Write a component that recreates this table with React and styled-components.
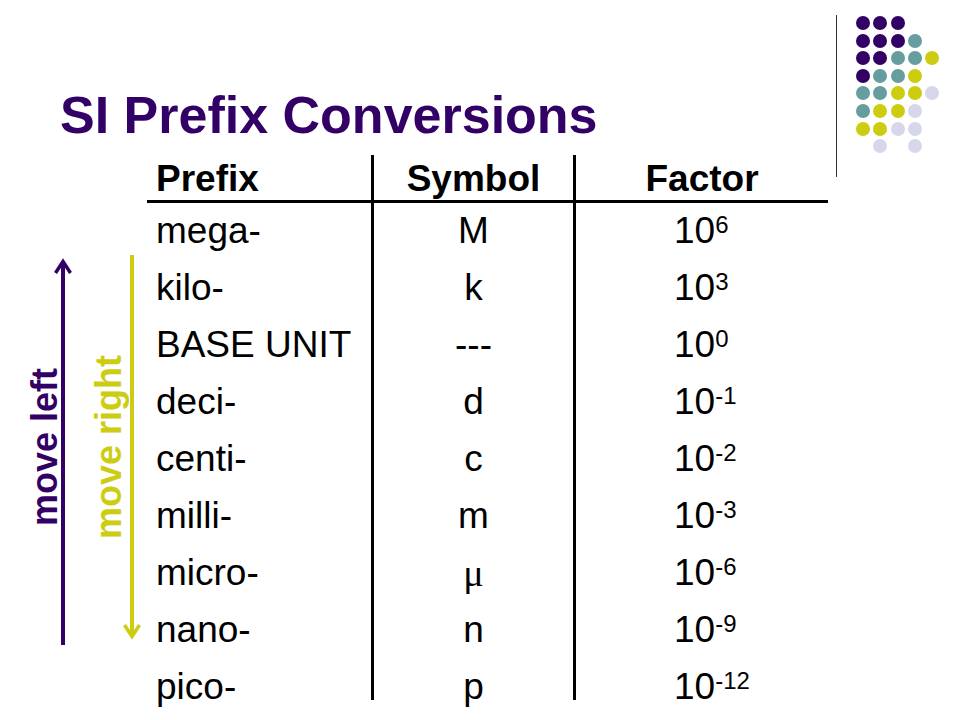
import styled, { createGlobalStyle } from "styled-components";

const GlobalStyle = createGlobalStyle`
    html, body {
        margin: 0;
        padding: 0;
        background: #fff;
    }
    body {
        font-family: "Liberation Sans", Arial, sans-serif;
        color: #000;
    }
`;

const PURPLE = "#330066";
const TEAL = "#669d9e";
const YELLOW = "#cccc11";
const LAVENDER = "#d7d7ec";

const Slide = styled.div`
    width: 960px;
    height: 720px;
    display: grid;
    grid-template-columns: 147px 681px 1fr;
    grid-template-rows: 155px 1fr;
    overflow: hidden;
    font-family: "Liberation Sans", Arial, sans-serif;
`;

const Title = styled.h1`
    grid-column: 1 / 3;
    grid-row: 1;
    margin: 0;
    padding: 86px 0 0 60px;
    font-size: 52px;
    font-weight: 700;
    line-height: 59px;
    color: ${PURPLE};
    white-space: nowrap;
`;

const Decor = styled.div`
    grid-column: 3;
    grid-row: 1 / 3;
    display: flex;
    align-items: flex-start;
    padding: 15px 0 0 8px;
`;

const Rule = styled.div`
    width: 1px;
    height: 162px;
    background: #333;
`;

const DotGrid = styled.div`
    display: grid;
    grid-template-columns: repeat(5, 14px);
    grid-auto-rows: 14px;
    column-gap: 3.3px;
    row-gap: 3.6px;
    margin: 1px 0 0 19px;
`;

const Dot = styled.span`
    width: 14px;
    height: 14px;
    border-radius: 50%;
    background: ${p => p.$color || "transparent"};
`;

const Side = styled.div`
    grid-column: 1;
    grid-row: 2;
    display: flex;
    align-items: flex-start;
    padding-left: 27px;
`;

const ArrowGroup = styled.div`
    display: flex;
    align-items: center;
    margin-top: ${p => p.$top}px;
    margin-right: ${p => p.$after || 0}px;
`;

const Label = styled.span`
    writing-mode: vertical-rl;
    transform: rotate(180deg);
    font-size: 36px;
    font-weight: 700;
    line-height: 36px;
    white-space: nowrap;
    color: ${p => p.$color};
    margin-top: ${p => p.$shift || 0}px;
`;

const ArrowSvg = styled.svg`
    display: block;
    margin-left: ${p => p.$pull}px;
    flex: none;
`;

const Table = styled.div`
    grid-column: 2;
    grid-row: 2;
    display: grid;
    grid-template-columns: 224px 202px 255px;
    align-content: start;
`;

const Cell = styled.div`
    box-sizing: border-box;
    height: ${p => (p.$head ? 48 : p.$last ? 41 : 57)}px;
    padding-top: ${p => (p.$head ? 3 : 7)}px;
    font-size: 37px;
    line-height: 42px;
    font-weight: ${p => (p.$head ? 700 : 400)};
    border-bottom: ${p => (p.$head ? "3px solid #000" : "none")};
    border-left: ${p => (p.$divided ? "3px solid #000" : "none")};
    white-space: nowrap;
`;

const PrefixCell = styled(Cell)`
    padding-left: 9px;
`;

const SymbolCell = styled(Cell)`
    text-align: center;
`;

const FactorCell = styled(Cell)`
    text-align: ${p => (p.$head ? "center" : "left")};
    padding-left: ${p => (p.$head ? 0 : 98)}px;
`;

const Mu = styled.span`
    font-family: "Liberation Serif", "Times New Roman", serif;
    font-size: 38px;
`;

const Sup = styled.sup`
    font-size: 24px;
    line-height: 0;
    vertical-align: 10px;
`;

const dots = [
    "PPP..",
    "PPPT.",
    "PPTTY",
    "PTTY.",
    "TTYYL",
    "TYYL.",
    "YYLL.",
    ".L.L.",
];
const dotColors = { P: PURPLE, T: TEAL, Y: YELLOW, L: LAVENDER };

const rows = [
    ["mega-", "M", "6"],
    ["kilo-", "k", "3"],
    ["BASE UNIT", "---", "0"],
    ["deci-", "d", "-1"],
    ["centi-", "c", "-2"],
    ["milli-", "m", "-3"],
    ["micro-", "μ", "-6"],
    ["nano-", "n", "-9"],
    ["pico-", "p", "-12"],
];

function Arrow({ height, color, up, pull }) {
    const h = height;
    return (
        <ArrowSvg width="18" height={h} viewBox={`0 0 18 ${h}`} $pull={pull}>
            {up ? (
                <>
                    <line x1="9" y1="4" x2="9" y2={h} stroke={color} strokeWidth="4" />
                    <polyline points="1.5,15 9,3.5 16.5,15" fill="none" stroke={color} strokeWidth="3.5" />
                </>
            ) : (
                <>
                    <line x1="9" y1="0" x2="9" y2={h - 4} stroke={color} strokeWidth="4" />
                    <polyline points={`1.5,${h - 15} 9,${h - 3.5} 16.5,${h - 15}`} fill="none" stroke={color} strokeWidth="3.5" />
                </>
            )}
        </ArrowSvg>
    );
}

export default function App() {
    return (
        <>
            <GlobalStyle />
            <Slide>
                <Title>SI Prefix Conversions</Title>
                <Decor>
                    <Rule />
                    <DotGrid>
                        {dots.join("").split("").map((c, i) => (
                            <Dot key={i} $color={dotColors[c]} />
                        ))}
                    </DotGrid>
                </Decor>
                <Side>
                    <ArrowGroup $top={103} $after={19}>
                        <Label $color={PURPLE} $shift={-9}>move left</Label>
                        <Arrow height={387} color={PURPLE} pull={-9} up />
                    </ArrowGroup>
                    <ArrowGroup $top={100}>
                        <Label $color={YELLOW}>move right</Label>
                        <Arrow height={385} color={YELLOW} pull={-4} />
                    </ArrowGroup>
                </Side>
                <Table>
                    <PrefixCell $head>Prefix</PrefixCell>
                    <SymbolCell $head $divided>Symbol</SymbolCell>
                    <FactorCell $head $divided>Factor</FactorCell>
                    {rows.map(([prefix, symbol, exp], i) => {
                        const last = i === rows.length - 1;
                        return [
                            <PrefixCell key={prefix} $last={last}>{prefix}</PrefixCell>,
                            <SymbolCell key={prefix + "s"} $last={last} $divided>
                                {symbol === "μ" ? <Mu>μ</Mu> : symbol}
                            </SymbolCell>,
                            <FactorCell key={prefix + "f"} $last={last} $divided>
                                10<Sup>{exp}</Sup>
                            </FactorCell>,
                        ];
                    })}
                </Table>
            </Slide>
        </>
    );
}
